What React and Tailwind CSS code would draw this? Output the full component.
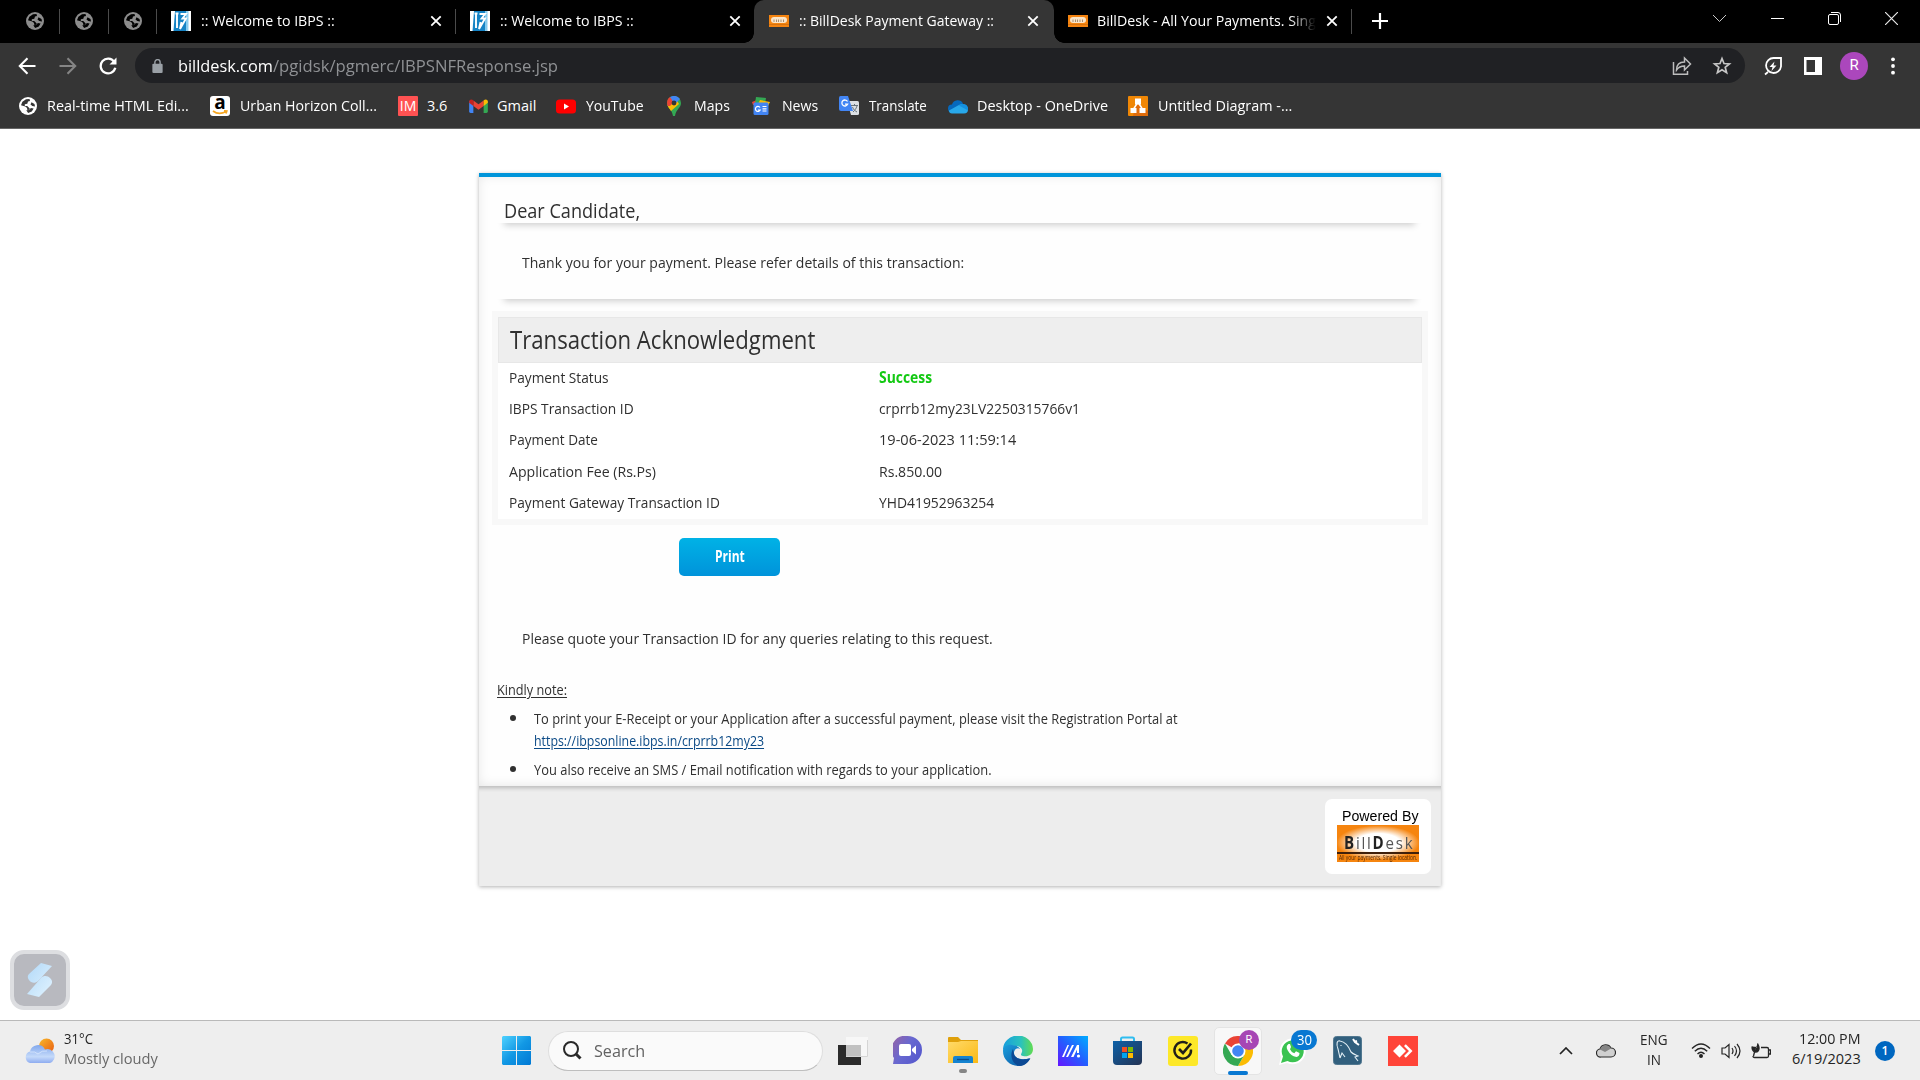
import { useLayoutEffect, useRef } from "react";

/* One line of text, condensed or widened to fill the width of its box. */
function T({ className = "", children }) {
  const box = useRef(null);
  const inner = useRef(null);
  useLayoutEffect(() => {
    const natural = inner.current.offsetWidth;
    if (natural) inner.current.style.transform = `scaleX(${box.current.clientWidth / natural})`;
  }, []);
  return (
    <span ref={box} className={`block shrink-0 whitespace-nowrap ${className}`}>
      <span ref={inner} className="inline-block origin-left [text-decoration:inherit]">{children}</span>
    </span>
  );
}

const Globe = ({ className }) => (
  <svg viewBox="0 0 20 20" className={className}>
    <circle cx="10" cy="10" r="9" fill="currentColor" />
    <path d="M8 3.2 4.4 5.8 3 9.3l4.3 1.3 1.8 1.3v1.8l2.4.3.2-1.6-2.5-2.4H6.8V8.3l2.5-.6.7-2.1 2-.5-.5-2.2z" className="fill-[var(--land)]" />
    <path d="M13.5 6.2l-1 2.3 1.8 1.4 2.7.6-.5-2.6zM8.3 14.3l3-.3 1.5-2 2.8.4-1.8 3-3.7 1.7z" className="fill-[var(--land)]" />
  </svg>
);

const IbpsIcon = () => (
  <svg viewBox="0 0 20 20" className="size-5 shrink-0">
    <path fill="#fff" d="M0 0h20v20H0z" />
    <path fill="#1583c5" d="M2.500 20 4 0h12.500v20z" />
    <path fill="#86cbee" d="M15 0h2.500v20H15z" />
    <path d="M4.500 2.500h3M6 3v14M9.500 3H15l-3.500 4.500H15L9 18l1.500-7" fill="none" stroke="#fff" strokeWidth="1.900" />
  </svg>
);

const DeskIcon = () => (
  <svg viewBox="0 0 20 14" className="h-[14px] w-5 shrink-0">
    <path fill="#f58410" d="M0 1h20v12H0z" />
    <rect x="2" y="3" width="16" height="6" rx="3" fill="#fbe5c8" />
    <path d="M5 5.500v2.500M7.500 5.500v2.500M9.500 5.500v2.500M12 5.500v2.500M14.500 5.500v2.500" stroke="#a58d74" />
    <path d="M0 10.500h20" stroke="#d8730f" />
  </svg>
);

const Close = () => (
  <svg viewBox="0 0 12 12" className="size-3 shrink-0" stroke="#fff" strokeWidth="1.8">
    <path d="m1.3 1.3 9.4 9.4m0-9.4-9.4 9.4" />
  </svg>
);

function TabStrip() {
  return (
    <div className="flex h-[43px] items-center bg-black pb-px text-[14.5px] leading-5 text-white">
      <div className="flex h-full items-center pl-[25px] text-[#8c8c8c] [--land:#000]">
        <Globe className="size-5" />
        <div className="ml-[14px] mr-[14px] h-[25px] w-px bg-[#4b4b4b]" />
        <Globe className="size-5" />
        <div className="mx-[14px] h-[25px] w-px bg-[#4b4b4b]" />
        <Globe className="size-5" />
        <div className="ml-[13px] h-[25px] w-px bg-[#4b4b4b]" />
      </div>
      <div className="flex w-[299px] items-center pl-[14px]">
        <IbpsIcon />
        <T className="ml-[10px] w-[134px]">:: Welcome to IBPS ::</T>
        <div className="ml-[95px]"><Close /></div>
        <div className="ml-[13px] h-[25px] w-px bg-[#4b4b4b]" />
      </div>
      <div className="flex w-[298px] items-center pl-[14px]">
        <IbpsIcon />
        <T className="ml-[10px] w-[134px]">:: Welcome to IBPS ::</T>
        <div className="ml-[95px]"><Close /></div>
      </div>
      <div className="relative -mb-px flex h-[43px] w-[300px] items-center rounded-t-[10px] bg-[#353535] pb-px pl-[15px]">
        <div className="absolute -left-[10px] bottom-0 size-[10px] bg-[radial-gradient(circle_at_0_0,#000_9.5px,#353535_10px)]" />
        <div className="absolute -right-[10px] bottom-0 size-[10px] bg-[radial-gradient(circle_at_100%_0,#000_9.5px,#353535_10px)]" />
        <DeskIcon />
        <T className="ml-[10px] w-[195px]">:: BillDesk Payment Gateway ::</T>
        <div className="ml-[33px]"><Close /></div>
      </div>
      <div className="flex w-[298px] items-center pl-[14px]">
        <DeskIcon />
        <T className="ml-[9px] w-[219px] [mask-image:linear-gradient(to_right,#000_88%,transparent)]">BillDesk - All Your Payments. Sing</T>
        <div className="ml-[10px]"><Close /></div>
        <div className="ml-[13px] h-[25px] w-px shrink-0 bg-[#4b4b4b]" />
      </div>
      <svg viewBox="0 0 16 16" className="ml-[20px] size-4" stroke="#fff" strokeWidth="2.2"><path d="M8 0v16M0 8h16" /></svg>
      <div className="ml-auto flex h-full gap-[44px] pr-[22px] pt-[12px]">
        <svg viewBox="0 0 13 13" className="mr-px size-[13px]" fill="none" stroke="#c9c9c9"><path d="m0 3 6.5 6.5L13 3" /></svg>
        <svg viewBox="0 0 13 13" className="size-[13px]" stroke="#fff"><path d="M0 6.5h13" /></svg>
        <svg viewBox="0 0 13 13" className="size-[13px]" fill="none" stroke="#fff"><rect x=".5" y="2.5" width="10" height="10" rx="1.5" /><path d="M3 .5h7Q12.5.5 12.5 3v7" /></svg>
        <svg viewBox="0 0 13 13" className="size-[13px]" stroke="#e8e8e8" strokeWidth="1.2"><path d="m0 0 13 13M13 0 0 13" /></svg>
      </div>
    </div>
  );
}

function AddressBar() {
  return (
    <div className="flex h-[45px] items-center pl-[18px] text-white">
      <svg viewBox="0 0 18 18" className="size-[18px]" fill="none" stroke="#fff" strokeWidth="2.1"><path d="M17.5 9H2M9.5 1.3 1.8 9l7.7 7.7" /></svg>
      <svg viewBox="0 0 18 18" className="ml-[23px] size-[18px]" fill="none" stroke="#858585" strokeWidth="2.1"><path d="M.5 9H16M8.5 1.3 16.2 9l-7.7 7.7" /></svg>
      <svg viewBox="0 0 18 18" className="ml-[22px] size-[18px]" fill="none" stroke="#fff" strokeWidth="2.3"><path d="M15.2 4.8A7.4 7.4 0 1 0 16.3 10.8" /><path d="M17.5.5v7h-7z" fill="#fff" stroke="none" /></svg>
      <div className="ml-[18px] flex h-[35px] w-[1610px] shrink-0 items-center rounded-full bg-[#202124] pl-[17px]">
        <svg viewBox="0 0 11 15" className="h-[14px] w-[11px]"><rect y="5" width="11" height="10" rx="1.2" fill="#9aa0a6" /><path d="M2.7 6V3.5a2.8 2.8 0 0 1 5.6 0V6" fill="none" stroke="#9aa0a6" strokeWidth="1.5" /></svg>
        <T className="ml-[15px] w-[95px] text-[17px] leading-[26px]">billdesk.com</T>
        <T className="w-[285px] text-[17px] leading-[26px] text-[#8f9194]">/pgidsk/pgmerc/IBPSNFResponse.jsp</T>
        <svg viewBox="0 0 20 20" className="ml-auto size-5" fill="none" stroke="#bdbdbd" strokeWidth="1.5"><path d="M1.5 6v12.2h14V15" /><path d="M4.5 14c0-6 3-8 8-8V2l6 6-6 6v-4c-4 0-6 1-8 4z" /></svg>
        <svg viewBox="0 0 20 20" className="ml-[20px] mr-[13px] size-5" fill="none" stroke="#c6c6c6" strokeWidth="1.7"><path d="m10 2.500 2 5 5.400.400-4.200 3.400 1.400 5.300-4.600-2.900-4.600 2.900 1.400-5.300-4.200-3.400 5.400-.400z" /></svg>
      </div>
      <svg viewBox="0 0 20 20" className="ml-[18px] size-5" fill="none" stroke="#fff" strokeWidth="1.800"><path d="M18 2v8.500a7.500 7.500 0 1 1-7.500-8.500zM5 16l-3 2.500" /><path d="m11.500 5.500-5 5.500h3L8.500 15l5-5.500h-3z" fill="#fff" stroke="none" /></svg>
      <svg viewBox="0 0 18 18" className="ml-[21px] size-[18px]"><path fill="#fff" d="M0 0h18v18H0z" /><path fill="#353535" d="M2.5 3H11v12H2.5z" /></svg>
      <div className="ml-[18px] flex size-7 items-center justify-center rounded-full bg-[#ab47bc] font-['Roboto'] text-[15px]">R</div>
      <svg viewBox="0 0 4 18" className="ml-[23px] h-[18px] w-1" fill="#fff"><circle cx="2" cy="2.3" r="1.9" /><circle cx="2" cy="9" r="1.9" /><circle cx="2" cy="15.7" r="1.9" /></svg>
    </div>
  );
}

function Bookmarks() {
  return (
    <div className="flex h-[40px] items-center pb-[4px] pl-[18px] text-[14.5px] leading-5 text-white">
      <Globe className="size-5 [--land:#353535]" />
      <T className="ml-[9px] w-[142px]">Real-time HTML Edi...</T>
      <div className="relative ml-[21px] flex size-5 justify-center rounded-[3px] bg-white font-['Open_Sans'] text-[19px] font-bold leading-[13px] text-black">
        a
        <svg viewBox="0 0 16 5" className="absolute bottom-[1px] h-[5px] w-4" fill="none" stroke="#f5a623" strokeWidth="1.7"><path d="M1 1q6 4.5 13 .5M12 .8l2.8.2-.8 2.5" /></svg>
      </div>
      <T className="ml-[10px] w-[137px]">Urban Horizon Coll...</T>
      <div className="ml-[21px] flex size-5 items-center justify-center rounded-[1px] bg-[#ff5252] text-[14px]">IM</div>
      <T className="ml-[9px] w-[20px]">3.6</T>
      <svg viewBox="0 0 20 15" className="ml-[22px] h-[14px] w-[19px]"><path fill="#4285f4" d="M0 2v11.5Q0 15 1.5 15h3V6z" /><path fill="#34a853" d="M20 2v11.5q0 1.5-1.5 1.5h-3V6z" /><path fill="#ea4335" d="M4.5 1.5 10 5.7l5.5-4.2v6L10 11.5 4.500 7.500z" /><path fill="#c5221f" d="M0 3c0-3 3-3 4.500-1.500v6L0 4z" /><path fill="#fbbc04" d="M20 3c0-3-3-3-4.500-1.500v6L20 4z" /></svg>
      <T className="ml-[9px] w-[39px]">Gmail</T>
      <svg viewBox="0 0 20 14" className="ml-[20px] h-[15px] w-5"><rect width="20" height="14" rx="3.500" fill="#f00" /><path d="m8 4 5 3-5 3z" fill="#fff" /></svg>
      <T className="ml-[10px] w-[58px]">YouTube</T>
      <svg viewBox="0 0 14 20" className="ml-[23px] h-5 w-[14px]"><path fill="#34a853" d="M0 7a7 7 0 0 1 14 0c0 5-5 6-6 13H6C5 13 0 12 0 7z" /><path fill="#fbbc04" d="M.5 9 9 3l3 5-8 7C2 12 1 11 .5 9z" /><path fill="#ea4335" d="M0 7q0-4 3-6l5 4-5 5H.6z" /><path fill="#4285f4" d="M3 1q6-3 10 2L7 9 5 4z" /><circle cx="7" cy="7" r="2.400" fill="#353535" /></svg>
      <T className="ml-[13px] w-[36px]">Maps</T>
      <svg viewBox="0 0 18 18" className="ml-[22px] size-[18px]"><path fill="#ea4335" d="m0 5 5-2 2 5H1z" /><path fill="#34a853" d="m4 0 10 1-1 6H3z" /><path fill="#fbbc04" d="m8 3 10 2-2 4H5z" /><rect x="1.500" y="5.500" width="15" height="12.500" rx="1.500" fill="#4285f4" /><path d="M8 10.500a2.500 2.500 0 1 0 .2 2.500H6M10.500 9.500h4M10.500 11.800h4M10.500 14h4" fill="none" stroke="#fff" strokeWidth="1.200" /></svg>
      <T className="ml-[12px] w-[36px]">News</T>
      <svg viewBox="0 0 20 20" className="ml-[21px] size-5"><path fill="#dce0e4" d="M8 5h10.500Q20 5 20 6.500v11q0 1.500-1.500 1.500H12z" /><path fill="#4285f4" d="M1.500 0H9l5 15H2Q0 15 0 13V2Q0 0 1.500 0z" /><path d="M8.500 5.500a3 3 0 1 0 .2 2.600H6" fill="none" stroke="#fff" strokeWidth="1.300" /><path d="M12 9.500h7M15.500 8v2M18 10c-1 3-2 4-4 6M13.500 11c1 3 3 4 4.500 5" fill="none" stroke="#68747e" /></svg>
      <T className="ml-[10px] w-[58px]">Translate</T>
      <svg viewBox="0 0 20 14" className="ml-[21px] h-[15px] w-5"><path fill="#0669bd" d="M4 13a4 4 0 0 1 0-8 6 6 0 0 1 11-1l-4 8z" /><path fill="#28a8ea" d="M4 14C2 14 1 13 1 11l9-5q3-2 6-1 4 1 4 5t-4 4z" /><path fill="#1490df" d="M15.500 4.500q4.500.5 4.500 5v1.500l-9-5q2-1.500 4.500-1.500z" /></svg>
      <T className="ml-[9px] w-[131px]">Desktop - OneDrive</T>
      <svg viewBox="0 0 20 20" className="ml-[20px] size-5"><rect width="20" height="20" rx="1" fill="#f08705" /><path d="m8 7 12 8v5H5z" fill="#df6c0c" /><path d="M10 6 5 14M10 6l5 8" stroke="#fff" strokeWidth="1.500" /><path fill="#fff" d="M7 2.500h6v6H7zM2.500 12h6v5h-6zM11.500 12h6v5h-6z" /></svg>
      <T className="ml-[10px] w-[134px]">Untitled Diagram -...</T>
    </div>
  );
}

const Row = ({ label, value }) => (
  <div className="flex h-[31.2px] items-center pb-[3px] pl-[11px]">
    <div className="w-[370px]">{label}</div>
    {value}
  </div>
);

function Receipt() {
  return (
    <div className="ml-[479px] mt-[44px] w-[962px] border-t-4 border-[#0095da] text-[15.2px] font-medium leading-5 text-[#303030] shadow-[0_1px_4px_rgba(0,0,0,0.3)]">
      <div className="h-[609px] bg-[#fefefe] pl-[13px] shadow-[inset_0_-1px_12px_-1px_rgba(0,0,0,0.1)]">
        <div className="ml-[5px] h-[46px] w-[925px] pl-[7px] pt-[19px] shadow-[0_9px_7px_-7px_rgba(0,0,0,0.2)]">
          <T className="w-[136px] text-[20.5px] font-normal leading-7">Dear Candidate,</T>
        </div>
        <div className="ml-[5px] mt-[8px] h-[68px] w-[925px] pl-[25px] pt-[21px] shadow-[0_9px_7px_-7px_rgba(0,0,0,0.2)]">
          <T className="w-[442px]">Thank you for your payment. Please refer details of this transaction:</T>
        </div>
        <div className="mt-[12px] h-[214px] w-[936px] border-[6px] border-[#f8f8f8] bg-white">
          <div className="flex h-[46px] items-center border border-[#e7e7e7] bg-[#eeeeee] pb-[2px] pl-[11px]">
            <T className="w-[305px] text-[25px] font-normal leading-8">Transaction Acknowledgment</T>
          </div>
          <Row label={<T className="w-[100px]">Payment Status</T>} value={<T className="w-[53px] font-bold text-[#13c913]">Success</T>} />
          <Row label={<T className="w-[125px]">IBPS Transaction ID</T>} value={<T className="w-[201px]">crprrb12my23LV2250315766v1</T>} />
          <Row label={<T className="w-[89px]">Payment Date</T>} value={<T className="w-[137px]">19-06-2023 11:59:14</T>} />
          <Row label={<T className="w-[147px]">Application Fee (Rs.Ps)</T>} value={<T className="w-[63px]">Rs.850.00</T>} />
          <Row label={<T className="w-[211px]">Payment Gateway Transaction ID</T>} value={<T className="w-[115px]">YHD41952963254</T>} />
        </div>
        <button className="ml-[187px] mt-[13px] flex h-[38px] w-[101px] items-center justify-center rounded-[5px] bg-linear-to-b from-[#00b2e6] to-[#0093da] pb-[2px] font-bold text-white">
          <T className="w-[30px]">Print</T>
        </button>
        <T className="ml-[30px] mt-[52px] w-[471px]">Please quote your Transaction ID for any queries relating to this request.</T>
        <T className="ml-[5px] mt-[32px] w-[70px] text-[14.2px] underline underline-offset-2">Kindly note:</T>
        <ul className="text-[14.2px] leading-[22px]">
          <li className="mt-[8px] flex">
            <span className="ml-[18px] mr-[18px] mt-[7px] size-[6px] rounded-full bg-[#303030]" />
            <div>
              <T className="w-[644px]">To print your E-Receipt or your Application after a successful payment, please visit the Registration Portal at</T>
              <T className="w-[230px] text-[#0b4a86] underline underline-offset-2">https://ibpsonline.ibps.in/crprrb12my23</T>
            </div>
          </li>
          <li className="mt-[7px] flex">
            <span className="ml-[18px] mr-[18px] mt-[7px] size-[6px] rounded-full bg-[#303030]" />
            <T className="w-[458px]">You also receive an SMS / Email notification with regards to your application.</T>
          </li>
        </ul>
      </div>
      <div className="flex h-[100px] justify-end bg-[#ededed] pr-[10px] pt-[13px] shadow-[inset_0_5px_4px_-3px_rgba(0,0,0,0.22)]">
        <div className="flex h-[75px] w-[106px] flex-col rounded-[7px] bg-white pl-[12px] pt-[9px] text-black">
          <T className="ml-[5px] w-[76px] font-['Liberation_Sans'] text-[14px] font-normal leading-[17px]">Powered By</T>
          <div className="h-[37px] w-[82px] bg-[#f6850f] bg-[radial-gradient(ellipse_36px_15px_at_50%_48%,#fff_0,#fff_62%,#f6850f_115%)]">
            <div className="flex h-[29px] items-end border-b-2 border-[#40200b] pl-[7px]">
              <T className="w-[70px] text-[17px] leading-[19px] tracking-[2px] text-[#555]"><b className="text-[#222]">B</b>ill<b className="text-[#222]">D</b>esk</T>
            </div>
            <T className="ml-[2px] w-[78px] text-[7px] leading-[8px] text-[#542807]">All your payments. Single location.</T>
          </div>
        </div>
      </div>
    </div>
  );
}

const Chrome = () => (
  <svg viewBox="0 0 30 30" className="size-[30px]">
    <path fill="#ea4335" d="M15 15 2 7.500A15 15 0 0 1 28 7.500H15z" />
    <path fill="#fbbc04" d="M28 7.500A15 15 0 0 1 15 30l6.500-11.300L15 7.500z" />
    <path fill="#34a853" d="M15 30A15 15 0 0 1 2 7.500l6.500 11.300L15 22l6.400-3.200z" />
    <circle cx="15" cy="15" r="7.500" fill="#fff" />
    <circle cx="15" cy="15" r="5.800" fill="#4285f4" />
  </svg>
);

function Taskbar() {
  return (
    <div className="flex h-[60px] items-center border-t border-[#b9b9b9] bg-[#eeeeee] text-[14.500px] leading-5 text-[#252525]">
      <svg viewBox="0 0 30 26" className="ml-[25px] h-[26px] w-[30px]">
        <defs>
          <linearGradient id="sun" x2="1" y2="1"><stop stopColor="#f9b929" /><stop offset="1" stopColor="#e85b11" /></linearGradient>
          <linearGradient id="cl" x2="0" y2="1"><stop stopColor="#82a8ec" /><stop offset=".65" stopColor="#c5dafa" /><stop offset="1" stopColor="#8eacf0" /></linearGradient>
        </defs>
        <circle cx="21.500" cy="8" r="7.500" fill="url(#sun)" />
        <path fill="url(#cl)" d="M5 25a6 6 0 0 1 0-11.500 8 8 0 0 1 15-2 7 7 0 0 1 5 13.500z" />
        <path d="M5 14q5-1 8 2 4-4 9-3" fill="none" stroke="#e0edff" strokeWidth="1" opacity=".7" />
      </svg>
      <div className="ml-[9px] w-[438px] pb-[3px]">
        <T className="w-[29px]">31°C</T>
        <T className="w-[94px] text-[#686868]">Mostly cloudy</T>
      </div>
      <svg viewBox="0 0 29 29" className="size-[29px]">
        <defs><linearGradient id="win" x2="1" y2="1"><stop stopColor="#4fd2ff" /><stop offset=".5" stopColor="#1298e4" /><stop offset="1" stopColor="#0078d4" /></linearGradient></defs>
        <path fill="url(#win)" d="M1 0h13v14H0V1zM15 0h13l1 1v13H15zM0 15h14v14H1l-1-1zM15 15h14v13l-1 1H15z" />
      </svg>
      <div className="ml-[17px] flex h-[40px] w-[275px] items-center rounded-full border border-[#dedede] border-b-[#bebebe] bg-[#fafafa] pl-[14px]">
        <svg viewBox="0 0 19 19" className="size-[19px]" fill="none" stroke="#292929" strokeWidth="2"><circle cx="8" cy="8" r="7" /><path d="m12.500 12.500 5 5" strokeWidth="3" /></svg>
        <T className="ml-[12px] w-[51px] text-[16.500px] text-[#626262]">Search</T>
      </div>
      <svg viewBox="0 0 30 28" className="ml-[15px] h-7 w-[30px]">
        <path fill="#2b2b2b" d="M0 8h23v20H0z" /><path fill="#f7f7f7" d="M8 0h22v20H8z" /><path fill="#c1c1c1" d="M8 8h15v12H8z" /><path d="M8 19.500h21.500V3" fill="none" stroke="#d5d5d5" />
      </svg>
      <svg viewBox="0 0 29 29" className="ml-[25px] size-[29px]">
        <defs><linearGradient id="chat" x1="0" y1=".2" x2="1" y2=".8"><stop stopColor="#9163aa" /><stop offset=".45" stopColor="#6868d0" /><stop offset="1" stopColor="#5558cd" /></linearGradient></defs>
        <path fill="url(#chat)" d="M14.500 0a14.500 14 0 0 1 0 28H0l1-6A14 14 0 0 1 14.500 0z" /><rect x="6" y="8" width="12" height="12" rx="2" fill="#fff" /><path fill="#fff" d="m19 13 4-3.500v9L19 15z" />
      </svg>
      <div className="relative ml-[26px]">
        <svg viewBox="0 0 30 27" className="h-[27px] w-[30px]">
          <defs><linearGradient id="fold" x2="1" y2="1"><stop stopColor="#ffda6a" /><stop offset="1" stopColor="#fbb914" /></linearGradient></defs>
          <path fill="#dfa00b" d="M0 1q0-1 1-1h9l3 3h17v4H0z" /><path fill="url(#fold)" d="M0 5h10l3-1h17v22H0z" /><path fill="#1583d0" d="M5 26v-5q0-2 2-2h16q2 0 2 2v5z" /><path d="M9 22.500h12" stroke="#0a4d8b" strokeWidth="1.300" />
        </svg>
        <div className="absolute -bottom-[9px] left-[11px] h-1 w-2 rounded-full bg-[#858585]" />
      </div>
      <svg viewBox="0 0 30 30" className="ml-[25px] size-[30px]">
        <defs><linearGradient id="e1"><stop stopColor="#179ede" /><stop offset=".6" stopColor="#2bc2bc" /><stop offset="1" stopColor="#62dc50" /></linearGradient><linearGradient id="e2" x2="1" y2="1"><stop stopColor="#1b9fdc" /><stop offset="1" stopColor="#0b50a0" /></linearGradient></defs>
        <path fill="url(#e1)" d="M0 14A15 14 0 0 1 30 13c0 6-5 8-10 7-3-.5-2-2-1-4 1-3-2-6-6-6Q3 8 0 14z" />
        <path fill="url(#e2)" d="M0 15c0-5 5-7 9-6 4 0 7 2 8 4-3-2-6 1-6 4 0 5 7 8 16 5-2 5-7 8-12 8A15 15 0 0 1 0 15z" />
        <path fill="#0c4994" d="M10 13c-4 7 0 16 7 17 5 0 8-4 10.500-7.500C20 25 12 23 11 18z" />
      </svg>
      <svg viewBox="0 0 30 30" className="ml-[25px] size-[30px]">
        <defs><linearGradient id="my" x1="0" y1="1" x2="1" y2="0"><stop stopColor="#6515ff" /><stop offset=".5" stopColor="#245dff" /><stop offset="1" stopColor="#00adff" /></linearGradient></defs>
        <path fill="url(#my)" d="M0 0h30v30H0z" /><path fill="#fff" d="M4 21 9.500 9H11L6 21zM8 21l6-12h2l-6 12zM13 21l6-12h2v8h-2v-3.500L15.500 21z" /><circle cx="20.500" cy="20" r="1.600" fill="#fff" />
      </svg>
      <svg viewBox="0 0 29 29" className="ml-[25px] size-[29px]">
        <defs><linearGradient id="st" x2="1" y2="1"><stop stopColor="#0d61a8" /><stop offset="1" stopColor="#243353" /></linearGradient></defs>
        <path d="M8 7V3q0-1.500 1.500-1.500h10Q21 1.500 21 3v4" fill="none" stroke="#30bdf0" strokeWidth="2" /><path fill="url(#st)" d="M0 5h29v20q0 4-4 4H4q-4 0-4-4z" /><path fill="#f25022" d="M9 11h5v5H9z" /><path fill="#7fba00" d="M15 11h5v5h-5z" /><path fill="#00a4ef" d="M9 17h5v5H9z" /><path fill="#ffb900" d="M15 17h5v5h-5z" />
      </svg>
      <svg viewBox="0 0 30 30" className="ml-[26px] size-[30px]"><rect width="30" height="30" rx="3" fill="#fde829" /><path d="M19.500 7.500A8.300 8.300 0 1 0 23 13.500" fill="none" stroke="#20201a" strokeWidth="2.400" /><path d="m11 13 4 4 8-9.500" fill="none" stroke="#20201a" strokeWidth="2.700" /></svg>
      <div className="relative ml-[16px] flex size-[48px] items-center justify-center rounded-[5px] border border-[#e4e4e4] bg-[#f8f8f8]">
        <Chrome />
        <div className="absolute right-[2px] top-[2px] flex size-5 items-center justify-center rounded-full bg-[#a646b4] font-['Roboto'] text-[11px] text-white">R</div>
        <div className="absolute -bottom-px left-[13px] h-1 w-5 rounded-full bg-[#0878d2]" />
      </div>
      <div className="relative ml-[16px]">
        <svg viewBox="0 0 30 30" className="size-[30px]"><path d="M1 29 3 21A13 13 0 1 1 9 27z" fill="#fff" /><path d="m3 27 2-6.500A11 11 0 1 1 9.500 25z" fill="#3bc351" /><path fill="#fff" d="M10.500 8q-3 2-1 6 3 6 9 7 3-.5 3-4l-3.500-1.700-1.700 2q-3-1-4.300-4L13 11l-1-3z" /></svg>
        <div className="absolute -top-[6px] left-[13px] flex h-5 w-[26px] items-center justify-center rounded-full bg-[#0878d2] text-[14px] text-white"><T className="w-[15px]">30</T></div>
      </div>
      <svg viewBox="0 0 29 29" className="ml-[25px] size-[29px]">
        <rect x=".5" y=".5" width="28" height="28" rx="3" fill="#315f7d" stroke="#50778f" />
        <path d="M7 22 5 13C3 8 4 4 7 5c6 1 9 6 11 11 2 2 5 3 7 4l-3 1 3 4M8 9v1M7 22l2-5 3 4" fill="none" stroke="#e4f0f6" strokeWidth="1.100" /><path d="m20 3 2 3 4 3M21 6l3-1" stroke="#fff" strokeWidth="2" />
      </svg>
      <svg viewBox="0 0 30 30" className="ml-[26px] size-[30px]"><path fill="#ff4438" d="M0 0h30v30H0z" /><path fill="#fff" d="m5 15 6.500-6.500L18 15l-6.500 6.500zM16 10l1.800-1.800L24.500 15l-6.700 6.700L16 20l5-5z" /></svg>

      <div className="ml-auto flex items-center pr-[25px]">
        <svg viewBox="0 0 14 8" className="h-2 w-[14px]" fill="none" stroke="#222" strokeWidth="1.700"><path d="m1 7 6-6 6 6" /></svg>
        <svg viewBox="0 0 20 14" className="ml-[23px] h-[14px] w-5"><path d="M5 13a4 4 0 0 1-1-8 6 6 0 0 1 11-1 4.500 4.500 0 0 1 0 9z" fill="#d0d0d0" stroke="#292929" strokeWidth="1.200" /><path d="M4 5.500a6 6 0 0 1 11-1L9 8z" fill="#858585" /></svg>
        <div className="ml-[24px] flex w-[28px] flex-col items-center pb-px"><T className="w-[28px]">ENG</T><T className="w-[14px]">IN</T></div>
        <svg viewBox="0 0 20 15" className="ml-[23px] h-[15px] w-5" fill="none" stroke="#252525" strokeWidth="1.400"><path d="M1 5.500q9-9 18 0M3.800 8.300q6.200-6 12.400 0M6.500 11q3.500-3.500 7 0" /><circle cx="10" cy="13" r="1.300" fill="#252525" /></svg>
        <svg viewBox="0 0 20 16" className="ml-[10px] h-4 w-5" fill="none" stroke="#252525" strokeWidth="1.200"><path d="M1 5h3l4-3.500v13L4 11H1zM11 5q2 3 0 6M13.500 3q4 5 0 10M16 1q6 7 0 14" /></svg>
        <svg viewBox="0 0 20 16" className="ml-[10px] h-4 w-5" fill="none" stroke="#252525" strokeWidth="1.300"><path d="M10 4.500h6q1.500 0 1.500 1.500v7q0 1.500-1.500 1.500H3.500Q2 14.500 2 13M18 7h1.500v4H18" /><path d="M6.500.5q2.500 4.500 1 7Q6 9.500 3.500 9L2.500 13M1 3.500q0 4 2.500 5.500l3-5" fill="#252525" /></svg>
        <div className="ml-[21px] flex w-[69px] flex-col items-end pb-[3px]"><T className="w-[62px]">12:00 PM</T><T className="w-[69px]">6/19/2023</T></div>
        <div className="ml-[14px] flex size-5 items-center justify-center rounded-full bg-[#0067c0] text-[12px] font-semibold text-white">1</div>
      </div>
    </div>
  );
}

export default function App() {
  return (
    <div className="flex h-[1080px] w-[1920px] flex-col overflow-hidden bg-white font-['Open_Sans',sans-serif]">
      <header className="h-[129px] shrink-0 border-b border-[#666] bg-[#353535]">
        <TabStrip />
        <AddressBar />
        <Bookmarks />
      </header>
      <main className="flex h-[891px] shrink-0 flex-col items-start">
        <Receipt />
        <div className="mb-[10px] ml-[10px] mt-auto flex size-[60px] items-center justify-center rounded-[14px] border-4 border-[#dddee1] bg-[#b8b9bf]">
          <svg viewBox="0 0 26 34" className="h-[34px] w-[26px]">
            <defs><linearGradient id="s" x2="1" y2="1"><stop stopColor="#b2d9f8" /><stop offset="1" stopColor="#e1f3ff" /></linearGradient></defs>
            <path fill="url(#s)" d="m14 0 11 3-14 15c-3 3-7 2-9-1s-1-5 0-6zM12 34 0 31l14-16c3-3 7-2 9 0s3 4 1 7z" />
          </svg>
        </div>
      </main>
      <Taskbar />
    </div>
  );
}
